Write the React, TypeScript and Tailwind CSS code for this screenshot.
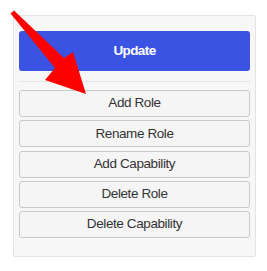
import React from 'react';

const actions = ['Add Role', 'Rename Role', 'Add Capability', 'Delete Role', 'Delete Capability'];

export default function App() {
    return (
        <div className="relative w-[267px] h-[271px] bg-white" style={{ fontFamily: '"Liberation Sans", Arial, sans-serif' }}>
            <div className="absolute left-[13px] top-[15px] w-[243px] h-[242px] bg-[#f7f7f7] border border-[#e3e3e3] rounded-[2px] px-[5px] pt-[15px]">
                <button className="w-full h-[40px] bg-[#3b53e2] text-white text-[13.5px] font-bold tracking-[-0.6px] rounded-[3px]">
                    Update
                </button>
                <div className="mt-[10px] mb-[8px] border-t border-[#e3e3e3]" />
                <div className="flex flex-col gap-[3.25px]">
                    {actions.map(a => (
                        <button
                            key={a}
                            className="w-full h-[27px] bg-[#f5f5f5] border border-[#c9c9c9] rounded-[3px] text-[13.5px] tracking-[-0.4px] text-[#333]"
                        >
                            {a}
                        </button>
                    ))}
                </div>
            </div>
            <svg className="absolute left-0 top-0" width="100" height="100" viewBox="0 0 100 100">
                <polygon points="10.5,13.5 14,10.5 64,58 73,52 86,94 45,80 55,68" fill="#fe0000" strokeLinejoin="round" />
            </svg>
        </div>
    );
}
